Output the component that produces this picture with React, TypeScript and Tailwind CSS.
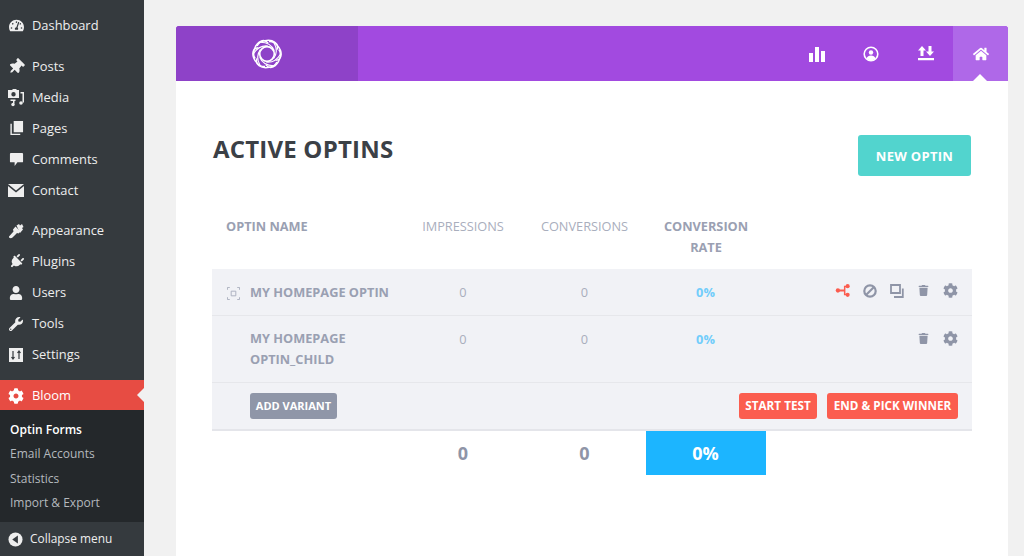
import React from 'react';
import { FaCog, FaHome, FaPlug, FaTachometerAlt, FaThumbtack, FaTrash, FaUser, FaWrench } from 'react-icons/fa';

const MediaIcon = () => (
    <svg viewBox="0 0 18 18" className="h-[18px] w-[18px]" fill="currentColor">
        <path d="M1 1h4l1-1h3l1 1h2v8H1zM6.500 3a2.200 2.200 0 1 0 0 4.400 2.200 2.200 0 0 0 0-4.400z" fillRule="evenodd" />
        <path d="M13.500 3H17v10.500h-1.500V4.500h-2zM3.500 10.500h5v1.500h-1v2.500H6V12H3.500z" />
        <circle cx="14" cy="14" r="1.800" />
        <circle cx="6" cy="15.500" r="1.700" />
    </svg>
);

const PagesIcon = () => (
    <svg viewBox="0 0 16 16" className="h-[15px] w-[15px]" fill="currentColor">
        <path d="M5 0h10v12H5z" />
        <path d="M3 3v10.500h9V15H1.500V3z" />
    </svg>
);

const CommentIcon = () => (
    <svg viewBox="0 0 16 16" className="h-[15px] w-[15px]" fill="currentColor">
        <path d="M2 1h12a1 1 0 0 1 1 1v8a1 1 0 0 1-1 1H9l-3 4v-4H2a1 1 0 0 1-1-1V2a1 1 0 0 1 1-1z" />
    </svg>
);

const MailIcon = () => (
    <svg viewBox="0 0 16 13" className="h-[13px] w-[16px]" fill="currentColor">
        <path d="M0 0h16L8 6.500z" />
        <path d="M0 2v11h16V2L8 8.600z" />
    </svg>
);

const BrushIcon = () => (
    <svg viewBox="0 0 16 16" className="h-[16px] w-[16px]" fill="currentColor">
        <path d="M8.500 2.500 11 1l1 1.500L14 1l1.500 3-1.500 1 1 1.500-3 3.500z" />
        <path d="M7.500 3.500l5 5-2 2-1.500-.5L4.500 14.500C3 16 .5 15 1 13.500L5.500 8.500 5 6.500z" />
    </svg>
);

const SettingsIcon = () => (
    <svg viewBox="0 0 14 14" className="h-[14px] w-[14px]">
        <path fill="currentColor" d="M0 0h14v14H0z" />
        <path stroke="#353a3e" strokeWidth="1.200" fill="none" d="M4 3v8M2.500 9 4 11l1.500-2M10 11V3M8.500 5 10 3l1.500 2" />
    </svg>
);

const CollapseIcon = () => (
    <svg viewBox="0 0 16 16" className="h-[15px] w-[15px]">
        <circle cx="8" cy="8" r="7.500" fill="currentColor" />
        <path fill="#353a3e" d="M10.500 3.800v8.400L4.500 8z" />
    </svg>
);

const BloomLogo = () => (
    <svg viewBox="0 0 32 32" className="h-[30px] w-[30px]" fill="none" stroke="#fff" strokeWidth="1.500">
        <circle cx="16" cy="16" r="7.800" strokeWidth="1.800" />
        {[0, 60, 120, 180, 240, 300].map(angle => (
            <g key={angle} transform={`rotate(${angle} 16 16)`}>
                <path d="M5.500 7.500C8 1.500 19 -.5 24.500 3.500 27.500 5.500 28 8 26.500 11.500" />
                <path d="M9 3.500C15 3.500 21 6 23.800 12.500" strokeWidth="1.200" />
            </g>
        ))}
    </svg>
);

const StatsIcon = () => (
    <svg viewBox="0 0 16 16" className="h-[16px] w-[16px]" fill="currentColor">
        <path d="M0 7h4v9H0zM6 1h4v15H6zM12 5h4v11h-4z" />
    </svg>
);

const AccountIcon = () => (
    <svg viewBox="0 0 16 16" className="h-[16px] w-[16px]" fill="none" stroke="currentColor">
        <circle cx="8" cy="8" r="6.800" strokeWidth="1.600" />
        <circle cx="8" cy="6.500" r="2.200" fill="currentColor" stroke="none" />
        <path d="M3.500 12.800c.5-2.500 2.500-3.300 4.500-3.300s4 .8 4.500 3.300L8 15z" fill="currentColor" stroke="none" />
    </svg>
);

const ImportIcon = () => (
    <svg viewBox="0 0 16 16" className="h-[16px] w-[16px]" fill="currentColor">
        <path d="M4 0l4 4.500H5.500V10h-3V4.500H0zM12 10l-4-4.500h2.500V0h3v5.500H16zM0 12h16v2.200H0z" />
    </svg>
);

const SplitIcon = () => (
    <svg viewBox="0 0 16 14" className="h-[13px] w-[16px]" fill="currentColor">
        <circle cx="2.500" cy="7" r="2.300" />
        <circle cx="13" cy="2.300" r="2.200" />
        <circle cx="13" cy="11.700" r="2.200" />
        <path d="M2.500 6h6.500V2h4v1.600h-2.400v6.800H13V12H9V8H2.500z" />
    </svg>
);

const BanIcon = () => (
    <svg viewBox="0 0 14 14" className="h-[14px] w-[14px]" fill="none" stroke="currentColor" strokeWidth="2.200">
        <circle cx="7" cy="7" r="5.700" />
        <path d="M3 11 11 3" />
    </svg>
);

const DuplicateIcon = () => (
    <svg viewBox="0 0 14 14" className="h-[14px] w-[14px]" fill="none" stroke="currentColor" strokeWidth="1.800">
        <path d="M1 1h9v8H1z" />
        <path d="M12.800 4.500V13H4" />
    </svg>
);

const FocusIcon = () => (
    <svg viewBox="0 0 14 14" className="h-[13px] w-[13px]" fill="none" stroke="currentColor" strokeWidth="1">
        <path d="M.5 3V.5H3M11 .5h2.500V3M13.500 11v2.500H11M3 13.500H.5V11" />
        <path d="M4.500 4.500h5v5h-5z" />
    </svg>
);

type MenuItem = { label: string; icon: React.ReactNode };
type MenuGroup = { gap: string; items: MenuItem[] };

const topGroups: MenuGroup[] = [
    { gap: 'mb-[10px]', items: [{ label: 'Dashboard', icon: <FaTachometerAlt size={15} /> }] },
    {
        gap: 'mb-[9px]',
        items: [
            { label: 'Posts', icon: <FaThumbtack size={16} className="rotate-45" /> },
            { label: 'Media', icon: <MediaIcon /> },
            { label: 'Pages', icon: <PagesIcon /> },
            { label: 'Comments', icon: <CommentIcon /> },
            { label: 'Contact', icon: <MailIcon /> },
        ],
    },
    {
        gap: 'mb-[10px]',
        items: [
            { label: 'Appearance', icon: <BrushIcon /> },
            { label: 'Plugins', icon: <FaPlug size={15} className="rotate-45" /> },
            { label: 'Users', icon: <FaUser size={14} /> },
            { label: 'Tools', icon: <FaWrench size={14} /> },
            { label: 'Settings', icon: <SettingsIcon /> },
        ],
    },
];

const Sidebar: React.FC = () => (
    <aside className="flex h-[556px] w-[144px] shrink-0 flex-col bg-[#353a3e] pt-[10px] text-[12.900px] font-medium text-[#eeeeee]">
        {topGroups.map(group => (
            <div key={group.items[0].label} className={group.gap}>
                {group.items.map(item => (
                    <div key={item.label} className="flex h-[31px] items-center">
                        <span className="flex w-[32px] shrink-0 justify-center">{item.icon}</span>
                        <span>{item.label}</span>
                    </div>
                ))}
            </div>
        ))}
        <div className="relative flex h-[30px] items-center bg-[#e74c43] pt-[1px] text-white">
            <span className="flex w-[32px] shrink-0 justify-center"><FaCog size={16} /></span>
            <span>Bloom</span>
            <span className="absolute right-0 top-[8px] h-0 w-0 border-y-[7px] border-r-[7px] border-y-transparent border-r-[#f1f1f1]" />
        </div>
        <div className="flex h-[112px] flex-col bg-[#24282b] pt-[7px] text-[12px] font-normal text-[#b4b9be]">
            <div className="flex h-[24.700px] items-center pl-[10px] pt-[1px] font-semibold text-white">Optin Forms</div>
            <div className="flex h-[24.700px] items-center pl-[10px]">Email Accounts</div>
            <div className="flex h-[24.700px] items-center pl-[10px]">Statistics</div>
            <div className="flex h-[24.700px] items-center pl-[10px]">Import &amp; Export</div>
        </div>
        <div className="flex h-[34px] items-center text-[11.900px]">
            <span className="flex w-[30px] shrink-0 justify-center pl-[1px]"><CollapseIcon /></span>
            <span>Collapse menu</span>
        </div>
    </aside>
);

const Header: React.FC = () => (
    <div className="flex h-[55px] overflow-hidden rounded-t-[3px] bg-[#a24ae0] text-white">
        <div className="flex w-[182px] items-center justify-center bg-[#8e42c8]"><BloomLogo /></div>
        <div className="flex flex-1 justify-end">
            <div className="flex w-[54px] items-center justify-center pl-[2px]"><StatsIcon /></div>
            <div className="flex w-[55px] items-center justify-center pl-[1px]"><AccountIcon /></div>
            <div className="flex w-[55px] items-center justify-center"><ImportIcon /></div>
            <div className="relative flex w-[55px] items-center justify-center bg-[#af68e8]">
                <FaHome size={16} />
                <span className="absolute bottom-0 left-[20px] h-0 w-0 border-x-[7px] border-b-[7px] border-x-transparent border-b-white" />
            </div>
        </div>
    </div>
);

const columns = 'grid grid-cols-[191px_121px_122px_120px_1fr]';
const actionCell = 'flex w-[27px] justify-center';

const Table: React.FC = () => (
    <div className="mt-[40px] text-[12.750px]">
        <div className={`${columns} h-[53px] items-start text-center leading-[21px] text-[#a9aebd]`}>
            <div className="pl-[14px] text-left font-bold text-[#9aa0b2]">OPTIN NAME</div>
            <div className="pr-[1px]">IMPRESSIONS</div>
            <div className="pr-[1px]">CONVERSIONS</div>
            <div className="px-[14px] font-bold text-[#9aa0b2]">CONVERSION RATE</div>
        </div>
        <div className="border-b-2 border-[#e4e5ea] bg-[#f1f2f6]">
            <div className={`${columns} h-[47px] items-center border-b border-[#e6e7eb] pt-[2px] text-center text-[#a9aebd]`}>
                <div className="flex items-center text-left font-bold text-[#9aa0b2]">
                    <span className="flex w-[38px] justify-center pl-[5px] text-[#a9aebd]"><FocusIcon /></span>
                    <span className="whitespace-nowrap">MY HOMEPAGE OPTIN</span>
                </div>
                <div className="pr-[1px]">0</div>
                <div className="pr-[1px]">0</div>
                <div className="pr-[1px] font-bold text-[#72cdfb]">0%</div>
                <div className="flex items-center justify-end pb-[5px] pr-[8px] text-[#8f95a7]">
                    <span className={`${actionCell} text-[#fb5d4f]`}><SplitIcon /></span>
                    <span className={actionCell}><BanIcon /></span>
                    <span className={actionCell}><DuplicateIcon /></span>
                    <span className={actionCell}><FaTrash size={11} /></span>
                    <span className={actionCell}><FaCog size={15} /></span>
                </div>
            </div>
            <div className={`${columns} h-[67px] items-center border-b border-[#e6e7eb] text-center text-[#a9aebd]`}>
                <div className="pl-[38px] text-left font-bold leading-[21px] text-[#9aa0b2]">MY HOMEPAGE OPTIN_CHILD</div>
                <div className="pb-[18px] pr-[1px]">0</div>
                <div className="pb-[18px] pr-[1px]">0</div>
                <div className="pb-[18px] pr-[1px] font-bold text-[#72cdfb]">0%</div>
                <div className="flex items-center justify-end pb-[22px] pr-[8px] text-[#8f95a7]">
                    <span className={actionCell}><FaTrash size={11} /></span>
                    <span className={actionCell}><FaCog size={15} /></span>
                </div>
            </div>
            <div className="flex h-[46px] items-center justify-between pl-[38px] pr-[14px] font-bold">
                <button className="h-[26px] w-[87px] rounded-[3px] bg-[#8f96a8] text-[11px] text-white">ADD VARIANT</button>
                <div className="flex gap-[10px] text-[11.700px]">
                    <button className="h-[26px] w-[78px] rounded-[3px] bg-[#fb5d4f] text-white">START TEST</button>
                    <button className="h-[26px] w-[131px] rounded-[3px] bg-[#fb5d4f] text-white">END &amp; PICK WINNER</button>
                </div>
            </div>
        </div>
        <div className={`${columns} h-[44px] items-center text-center text-[18px] font-bold text-[#8f95a7]`}>
            <div />
            <div className="pr-[1px]">0</div>
            <div className="pr-[1px]">0</div>
            <div className="flex h-full items-center justify-center bg-[#1cb5ff] pr-[1px] text-white">0%</div>
        </div>
    </div>
);

const App: React.FC = () => (
    <div className="flex h-[556px] w-[1024px] overflow-hidden bg-[#f1f1f1] font-['Open_Sans',sans-serif]">
        <Sidebar />
        <main className="flex-1 pl-[32px] pr-[16px] pt-[26px]">
            <div className="h-[530px] bg-white">
                <Header />
                <div className="px-[36px] pt-[54px]">
                    <div className="flex items-start justify-between pr-[1px]">
                        <h1 className="mt-[-4px] pl-[1px] text-[24px] font-bold leading-[36px] tracking-[0.2px] text-[#3b4046]">ACTIVE OPTINS</h1>
                        <button className="h-[41px] w-[113px] rounded-[3px] bg-[#52d4ce] pt-[2px] text-[13px] font-bold tracking-[0.3px] text-white">NEW OPTIN</button>
                    </div>
                    <Table />
                </div>
            </div>
        </main>
    </div>
);

export default App;
